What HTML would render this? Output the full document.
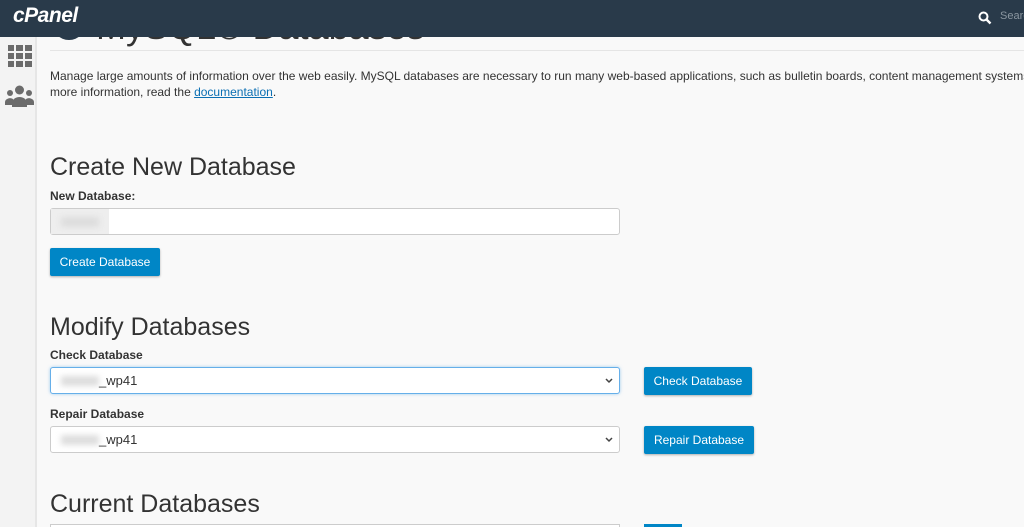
<!DOCTYPE html>
<html><head><meta charset="utf-8"><style>
*{box-sizing:border-box;margin:0;padding:0}
html,body{width:1024px;height:527px;overflow:hidden}
body{background:#f9f9f9;font-family:"Liberation Sans",sans-serif;color:#333;position:relative}
.hdr{position:absolute;left:0;top:0;width:1024px;height:37px;background:#293a4a;z-index:5}
.logo{position:absolute;left:13px;top:4px;color:#fff;font-size:21px;font-weight:bold;font-style:italic;letter-spacing:-0.5px}
.srch{position:absolute;left:1000px;top:10px;color:#8a96a0;font-size:11px}
.side{position:absolute;left:0;top:37px;width:37px;height:490px;background:#f3f3f3;border-right:2px solid #e6e6e6}
.abs{position:absolute}
.title{left:96px;top:6px;font-size:36px;color:#333;z-index:1}
.h2{position:absolute;left:50px;font-size:25px;color:#333}
.lbl{position:absolute;left:50px;font-size:12px;font-weight:bold;color:#333}
.inp{position:absolute;left:50px;width:570px;height:27px;background:#fff;border:1px solid #ccc;border-radius:3px}
.btn{position:absolute;background:#0086c6;color:#fff;font-size:12px;height:28px;line-height:28px;text-align:center;border-radius:2px;box-shadow:0 1px 2px rgba(0,0,0,.3)}
.blur{position:absolute;left:10px;top:8px;width:38px;height:10px;background:#ddd;filter:blur(3px)}
.val{position:absolute;left:48px;top:5px;font-size:13px;color:#333}
.chev{position:absolute;right:6px;top:10px}
p{position:absolute;left:50px;top:68px;font-size:12px;line-height:16px;color:#333;white-space:nowrap}
a{color:#0b6fb3}
</style></head><body>
<div class="abs title">MySQL® Databases</div>
<div class="abs" style="left:52px;top:6px;width:34px;height:34px;border-radius:50%;background:#293a4a;z-index:1"></div>
<div class="hdr"><div class="logo">cPanel</div>
<svg class="abs" style="left:978px;top:11px" width="14" height="14" viewBox="0 0 14 14"><circle cx="5.5" cy="5.5" r="4" fill="none" stroke="#fff" stroke-width="2"/><path d="M8.5 8.5L12.5 12.5" stroke="#fff" stroke-width="2.4"/></svg>
<div class="srch">Search</div></div>
<div class="side">
<svg class="abs" style="left:8px;top:8px" width="24" height="22" viewBox="0 0 24 22"><g fill="#6b6b6b"><rect x="0" y="0" width="6" height="6"/><rect x="8" y="0" width="7" height="6"/><rect x="17" y="0" width="7" height="6"/><rect x="0" y="8" width="6" height="6"/><rect x="8" y="8" width="7" height="6"/><rect x="17" y="8" width="7" height="6"/><rect x="0" y="16" width="6" height="6"/><rect x="8" y="16" width="7" height="6"/><rect x="17" y="16" width="7" height="6"/></g></svg>
<svg class="abs" style="left:5px;top:48px" width="29" height="22" viewBox="0 0 29 22"><g fill="#6b6b6b"><circle cx="14.5" cy="5" r="4.5"/><circle cx="5" cy="8" r="3"/><circle cx="24" cy="8" r="3"/><path d="M7 22v-4a7.5 6 0 0 1 15 0v4z"/><path d="M0 20v-3a5 4 0 0 1 8-3v6z"/><path d="M29 20v-3a5 4 0 0 0-8-3v6z"/></g></svg>
</div>
<div class="abs" style="left:50px;top:50px;width:974px;height:1px;background:#e5e5e5"></div>
<p>Manage large amounts of information over the web easily. MySQL databases are necessary to run many web-based applications, such as bulletin boards, content management systems<br>more information, read the <a href="#">documentation</a>.</p>
<div class="h2" style="top:153px">Create New Database</div>
<div class="lbl" style="top:189px">New Database:</div>
<div class="inp" style="top:208px"><div class="abs" style="left:0;top:0;width:58px;height:25px;background:#eee"></div><div class="blur"></div></div>
<div class="btn" style="left:50px;top:248px;width:110px">Create Database</div>
<div class="h2" style="top:313px">Modify Databases</div>
<div class="lbl" style="top:348px">Check Database</div>
<div class="inp" style="top:367px;border-color:#66afe9;box-shadow:0 0 3px rgba(102,175,233,.6)"><div class="blur"></div><div class="val">_wp41</div><svg class="chev" width="8" height="6" viewBox="0 0 8 6"><path d="M1 1l3 3 3-3" fill="none" stroke="#444" stroke-width="1.5"/></svg></div>
<div class="btn" style="left:644px;top:367px;width:108px">Check Database</div>
<div class="lbl" style="top:407px">Repair Database</div>
<div class="inp" style="top:426px"><div class="blur"></div><div class="val">_wp41</div><svg class="chev" width="8" height="6" viewBox="0 0 8 6"><path d="M1 1l3 3 3-3" fill="none" stroke="#444" stroke-width="1.5"/></svg></div>
<div class="btn" style="left:644px;top:426px;width:110px">Repair Database</div>
<div class="h2" style="top:490px">Current Databases</div>
<div class="abs" style="left:50px;top:524px;width:570px;height:3px;background:#fff;border:1px solid #ccc;border-bottom:none"></div>
<div class="abs" style="left:644px;top:524px;width:38px;height:3px;background:#0086c6"></div>
</body></html>
